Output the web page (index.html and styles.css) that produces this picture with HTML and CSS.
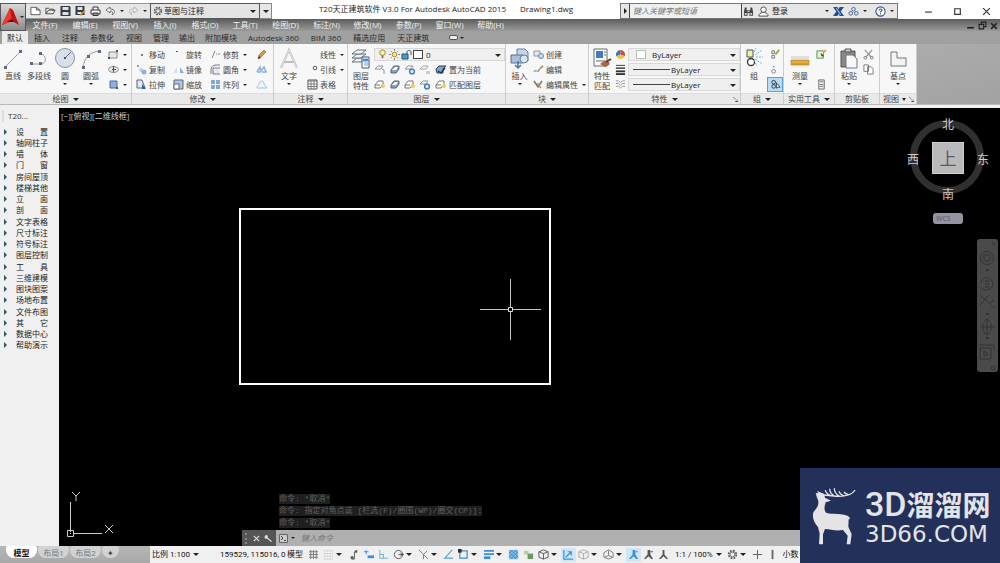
FILE: index.html
```html
<!DOCTYPE html>
<html lang="zh-CN">
<head>
<meta charset="utf-8">
<title>T20天正建筑软件 V3.0 For Autodesk AutoCAD 2015</title>
<link rel="stylesheet" href="styles.css">
</head>
<body>
<svg class="defs" aria-hidden="true">
  <symbol id="new" viewBox="0 0 12 10"><path d="M1 1h6l4 3v5H1zM7 1v3h4" fill="#fff" stroke="#555"/></symbol>
  <symbol id="open" viewBox="0 0 12 10"><path d="M1 8V2h3l1 1h4v2M1 8l3-4h7L9 8z" fill="#eee" stroke="#444"/></symbol>
  <symbol id="save" viewBox="0 0 10 10"><path d="M0 0h9l1 1v9H0z" fill="#333a44"/><path d="M2 1h6v3H2zM2 6h6v3H2z" fill="#dde2e8"/></symbol>
  <symbol id="saveas" viewBox="0 0 10 10"><path d="M0 0h9v9H0z" fill="#333a44"/><path d="M2 1h5v3H2zM2 6h4v2H2z" fill="#dde2e8"/><path d="M4 9l5-5 1 1-5 5z" fill="#d59b2c"/></symbol>
  <symbol id="print" viewBox="0 0 11 10"><path d="M3 4V1h5v3M1 4h9v4H1zM3 7h5v2.500H3z" fill="#fff" stroke="#333"/></symbol>
  <symbol id="undo" viewBox="0 0 11 10"><path d="M5 1L1 4l4 3V5c3 0 3 2 2 4 4-3 3-6-2-6z" fill="#f5f5f5" stroke="#555" stroke-width=".8"/></symbol>
  <symbol id="redo" viewBox="0 0 11 10"><path d="M6 1l4 3-4 3V5C3 5 3 7 4 9 0 6 1 3 6 3z" fill="#eee" stroke="#aaa" stroke-width=".8"/></symbol>
  <symbol id="gear" viewBox="0 0 12 12"><circle cx="6" cy="6" r="4.200" fill="none" stroke="currentColor" stroke-width="1.800" stroke-dasharray="2 1.300"/><circle cx="6" cy="6" r="2.700" fill="none" stroke="currentColor"/></symbol>
  <symbol id="binoc" viewBox="0 0 12 11"><path d="M2 1h2v3h4V1h2l1 5v4H7V7H5v3H1V6z" fill="#444"/><path d="M2 7h2v2H2zM8 7h2v2H8zM5 5h2v1H5z" fill="#ddd"/></symbol>
  <symbol id="user" viewBox="0 0 12 12"><circle cx="6" cy="4" r="3" fill="#fff" stroke="#444"/><path d="M1 11c0-3 2-3 4-4h2c2 1 4 1 4 4z" fill="#fff" stroke="#444"/></symbol>
  <symbol id="exch" viewBox="0 0 10 10"><path d="M0 1h4l1 2 1-2h4L7 5l3 4H6L5 7 4 9H0l3-4z" fill="#1e4d92"/><path d="M3 2l4 6" stroke="#9fc0ea"/></symbol>
  <symbol id="a360" viewBox="0 0 12 11"><g fill="#dbe3f4" stroke="#3f5f96"><circle cx="6" cy="3" r="2"/><circle cx="3" cy="7.500" r="2"/><circle cx="9" cy="7.500" r="2"/></g></symbol>
  <symbol id="help" viewBox="0 0 12 12"><circle cx="6" cy="6" r="5" fill="#fff" stroke="#31568f" stroke-width="1.200"/><path d="M4.500 5c0-2.500 3.500-2 3 0-.2.800-1.500.9-1.500 2M6 8v1.300" fill="none" stroke="#31568f" stroke-width="1.200"/></symbol>

  <symbol id="line" viewBox="0 0 22 24"><path d="M3 20L19 4" stroke="#999"/><path d="M2 19h3v3H2zM17 3h3v3h-3z" fill="#5c6b88"/></symbol>
  <symbol id="pline" viewBox="0 0 22 24"><path d="M3 17h10c6 0 6-10-1-10" fill="none" stroke="#999"/><path d="M2 15h3v3H2zM11 15h3v3h-3zM11 5h3v3h-3z" fill="#5c6b88"/></symbol>
  <symbol id="circle" viewBox="0 0 22 24"><circle cx="11" cy="11" r="9.500" fill="#d9dfe8" stroke="#8a93a3"/><path d="M11 11l6-6" stroke="#5c6b88"/><path d="M10 10h2v2h-2z" fill="#456"/></symbol>
  <symbol id="arc" viewBox="0 0 22 24"><path d="M3 21C4 11 9 5 20 4" fill="none" stroke="#999"/><path d="M2 19h3v3H2zM7 8h3v3H7zM18 3h3v3h-3z" fill="#5c6b88"/></symbol>
  <symbol id="rect" viewBox="0 0 11 11"><path d="M1 3h8v6H1z" fill="#e4e7ec" stroke="#888"/><path d="M8 1h2v2H8zM0 8h2v2H0z" fill="#456"/></symbol>
  <symbol id="ell" viewBox="0 0 11 11"><ellipse cx="5.500" cy="5.500" rx="5" ry="3" fill="#e4e7ec" stroke="#888"/><path d="M5.500 2v6M4 5.500h4" stroke="#456"/></symbol>
  <symbol id="hatch" viewBox="0 0 11 11"><path d="M2 2h7v7H2z" fill="#8db0de" stroke="#4c6a96"/><path d="M8 8h2v2H8z" fill="#456"/></symbol>
  <symbol id="dot" viewBox="0 0 11 11"><path d="M5 5h2v2H5z" fill="#778"/></symbol>
  <symbol id="rot" viewBox="0 0 11 11"><path d="M3 2h2v1H3z" fill="#558"/></symbol>
  <symbol id="copy" viewBox="0 0 11 11"><path d="M1 1h2v2H1z" fill="#99a"/><circle cx="5" cy="6" r="2" fill="#bcd2ee"/><circle cx="8" cy="8" r="2.500" fill="#8cb0df"/></symbol>
  <symbol id="mirror" viewBox="0 0 11 11"><path d="M0 9l4-6v6z" fill="#dde"/><path d="M11 9L7 3v6z" fill="#8cb0df"/></symbol>
  <symbol id="stretch" viewBox="0 0 11 11"><path d="M1 1h5l3 8H1z" fill="#dfe9f6" stroke="#567"/><path d="M6 5l4 5H6z" fill="#2d62a8"/></symbol>
  <symbol id="scale" viewBox="0 0 11 11"><path d="M1 1h9v9H1z" fill="#a6c4ea" stroke="#667"/><path d="M1 5h5v5H1z" fill="#fff" stroke="#667"/></symbol>
  <symbol id="trim" viewBox="0 0 11 11"><path d="M2 9L5 2M6 5h1M8 5h2" stroke="#889"/></symbol>
  <symbol id="fillet" viewBox="0 0 11 11"><path d="M1 10V6c0-3 2-5 5-5h4M3 10V4h7M3 10h7" fill="none" stroke="#778"/><path d="M4 9c0-3 2-4 5-4v4z" fill="#e3e8ee"/></symbol>
  <symbol id="array" viewBox="0 0 11 11"><path d="M1 1h4v4H1zM6 1h4v4H6zM1 6h4v4H1zM6 6h4v4H6z" fill="#86a9d2"/></symbol>
  <symbol id="erase" viewBox="0 0 11 11"><path d="M2 10l1-4 5-5 2 2-5 5z" fill="#d79b45" stroke="#754" stroke-width=".6"/><path d="M2 10l1-3 2 2z" fill="#534"/></symbol>
  <symbol id="explode" viewBox="0 0 11 11"><path d="M1 8l3-5 1 4 3-4 2 5M1 8h4M6 8h5" fill="none" stroke="#8cb0df" stroke-width="1.500"/></symbol>
  <symbol id="offset" viewBox="0 0 11 11"><path d="M1 9c0-3 2-2 2-5 3-4 5-1 5 1l3 4z" fill="#eef4fb" stroke="#9cc0e6"/></symbol>
  <symbol id="biga" viewBox="0 0 22 24"><path d="M3 21L11 3l8 18M6 15h10" fill="none" stroke="#b9bcc2" stroke-width="2"/><path d="M3 21L11 3l8 18" fill="none" stroke="#fff" stroke-width=".6"/></symbol>
  <symbol id="leader" viewBox="0 0 11 11"><circle cx="8" cy="4" r="1.800" fill="none" stroke="#555"/></symbol>
  <symbol id="table" viewBox="0 0 11 11"><path d="M1 1h9v9H1z" fill="#fff" stroke="#555"/><path d="M1 2h9M1 5h9M1 7.500h9M4 2v8M7 2v8" stroke="#666" stroke-width=".8"/></symbol>
  <symbol id="layers" viewBox="0 0 22 24"><g fill="#f1f3f5" stroke="#66707c"><path d="M2 15l5-4h9l-5 4z"/><path d="M2 11l5-4h9l-5 4z"/><path d="M2 7l5-4h9l-5 4z"/></g><path d="M12 10h7v11h-7z" fill="#fff" stroke="#3c5678"/><path d="M13 12h5v2h-5zM14 16h4M14 18h4" fill="#4b8ad0" stroke="#4b8ad0" stroke-width=".8"/></symbol>
  <symbol id="bulb" viewBox="0 0 10 12"><circle cx="5" cy="4" r="3" fill="#fff3a8" stroke="#9a7b20"/><path d="M4 7h2v3H4z" fill="#777"/></symbol>
  <symbol id="sun" viewBox="0 0 12 12"><circle cx="6" cy="6" r="2.500" fill="#ffe98a" stroke="#a87d18"/><path d="M6 0v2M6 10v2M0 6h2M10 6h2M2 2l1 1M9 9l1 1M2 10l1-1M9 3l1-1" stroke="#776"/></symbol>
  <symbol id="lock" viewBox="0 0 11 11"><path d="M1 5h6v5H1z" fill="#4a9bd5" stroke="#256"/><path d="M6 5V3c0-2 4-2 4 0v3" fill="none" stroke="#456"/></symbol>
  <symbol id="lay1" viewBox="0 0 12 11"><path d="M1 5l3-3h5L7 5zM8 5l2 1v4" fill="#fff" stroke="#8992a0"/></symbol>
  <symbol id="lay2" viewBox="0 0 12 11"><path d="M2 9V6l3-4h5v3L7 9z" fill="#7fa3d0" stroke="#5a6470"/><path d="M3 6l3-3h3L7 6z" fill="#fff"/></symbol>
  <symbol id="lay3" viewBox="0 0 12 11"><path d="M1 5l3-3h5L7 5z" fill="#fff" stroke="#8992a0"/><circle cx="8" cy="7.500" r="2.400" fill="#dcebfa" stroke="#3c78b9" stroke-width="1.400"/></symbol>
  <symbol id="lay4" viewBox="0 0 12 11"><path d="M1 5l3-3h5L7 5z" fill="#fff" stroke="#9da4ae"/><path d="M7 7h4v3H7z" fill="#c9ccd2"/></symbol>
  <symbol id="lay5" viewBox="0 0 12 11"><path d="M1 5l3-3h7L8 5v4H2z" fill="#7fa3d0" stroke="#333e50"/><path d="M3 7l3 2 4-5" fill="none" stroke="#234" stroke-width="1.300"/></symbol>
  <symbol id="lay6" viewBox="0 0 12 11"><path d="M1 9V6l3-4h5v3L6 9zM1 6h5" fill="#fff" stroke="#777"/><circle cx="9" cy="7" r="2" fill="#f2cc55"/></symbol>
  <symbol id="insert" viewBox="0 0 22 24"><path d="M8 2h8l3 3v9H8z" fill="#c3d5ec" stroke="#67809f"/><path d="M2 8h12v8H2z" fill="#a9bfdb" stroke="#5b6f8b"/><circle cx="15" cy="12" r="4" fill="#dbe6f3" stroke="#67809f"/><path d="M9 14v7M6 18l3 3 3-3" fill="none" stroke="#4a76ad" stroke-width="1.500"/></symbol>
  <symbol id="create" viewBox="0 0 11 11"><path d="M1 2h6v5H1z" fill="#e7ebf0" stroke="#8a94a2"/><circle cx="8" cy="7" r="2.500" fill="#c7dbf2" stroke="#6f86a5"/></symbol>
  <symbol id="edit" viewBox="0 0 11 11"><path d="M1 8c2-4 4 2 5-2 1-3 3-1 4-4" fill="none" stroke="#6f9bd0" stroke-width="1.300"/><path d="M5 6l4-5 1 1-4 5z" fill="#d2a252"/></symbol>
  <symbol id="attr" viewBox="0 0 11 11"><path d="M1 2l4 6 4-6" fill="none" stroke="#777" stroke-width="1.500"/><path d="M4 4l4 5" stroke="#c8953b" stroke-width="1.500"/></symbol>
  <symbol id="match" viewBox="0 0 22 24"><path d="M3 2h13v17H3z" fill="#fff" stroke="#667"/><path d="M5 4h7v7H5z" fill="#3e7cc2"/><path d="M13 5h2M13 8h2M5 14h9" stroke="#667"/><path d="M9 17l4-3c3-1 7 1 5 4l-4 2z" fill="#a9673c"/><path d="M15 15l5-3" stroke="#633" stroke-width="2"/></symbol>
  <symbol id="wheel" viewBox="0 0 12 12"><path d="M6 6V1a5 5 0 0 0-4.500 7z" fill="#486fc0"/><path d="M6 6V1a5 5 0 0 1 4.500 7z" fill="#d44b3d"/><path d="M6 6L1.500 8a5 5 0 0 0 9 0z" fill="#e8c33a"/></symbol>
  <symbol id="lw" viewBox="0 0 12 12"><path d="M1 1.500h10" stroke="#333"/><path d="M1 4.500h10" stroke="#333" stroke-width="1.500"/><path d="M1 8h10" stroke="#333" stroke-width="2"/><path d="M1 11h10" stroke="#333" stroke-width="2"/></symbol>
  <symbol id="lt" viewBox="0 0 12 12"><path d="M1 2h3l2 2 2-2h3M1 5h3l2 2 2-2h3M1 8h3l2 2 2-2h3" fill="none" stroke="#999"/></symbol>
  <symbol id="group" viewBox="0 0 22 24"><path d="M4 3h6v7H4z" fill="#eef2a8" stroke="#555"/><circle cx="8" cy="15" r="3.500" fill="#fff" stroke="#333" stroke-width="1.300"/><path d="M12 8l7-5M13 10h7M12 12l7 5M11 13l3 6M11 5l2-4" stroke="#78add8" stroke-dasharray="2 1"/></symbol>
  <symbol id="g1" viewBox="0 0 12 12"><path d="M2 2h3v3H2zM2 7h3v3H2z" fill="#eee" stroke="#777"/><path d="M6 6l4-5" stroke="#94a935" stroke-width="2"/></symbol>
  <symbol id="g2" viewBox="0 0 12 12"><path d="M3 2h2v2H3z" fill="#8cb0df"/><circle cx="4" cy="8" r="2" fill="#fff" stroke="#777"/></symbol>
  <symbol id="g3" viewBox="0 0 12 12"><circle cx="4" cy="3.500" r="2" fill="none" stroke="#234"/><circle cx="4" cy="8" r="2" fill="none" stroke="#234"/><path d="M7 4l4 5H9l-2 1z" fill="#fff" stroke="#345"/></symbol>
  <symbol id="ruler" viewBox="0 0 22 24"><path d="M2 9h18v3H2z" fill="#dedede"/><path d="M2 13h18v5H2z" fill="#e5ad3d" stroke="#a87a22" stroke-width=".6"/><path d="M3 17h16" stroke="#c48c22"/></symbol>
  <symbol id="qs" viewBox="0 0 12 12"><path d="M1 2h7v8H1z" fill="#e9f2df" stroke="#5f8a4c"/><path d="M5 4l4 4H6z" fill="#333"/><path d="M8 4l3-3" stroke="#e0a534" stroke-width="2"/></symbol>
  <symbol id="calc" viewBox="0 0 12 12"><path d="M3 1h6v10H3z" fill="#f1f1f1" stroke="#666"/><path d="M4 3h4M4 6h4M4 8h4" stroke="#777"/></symbol>
  <symbol id="paste" viewBox="0 0 22 24"><path d="M3 4h14v16H3z" fill="#888" stroke="#555"/><path d="M7 2h6v3H7z" fill="#ccc" stroke="#555"/><path d="M8 8h7l4 4v9H8z" fill="#f8f8f8" stroke="#777"/></symbol>
  <symbol id="cut" viewBox="0 0 12 12"><path d="M2 1l7 8M10 1L3 9" stroke="#999" stroke-width="1.400"/><circle cx="2.500" cy="9.500" r="1.500" fill="none" stroke="#777"/><circle cx="9.500" cy="9.500" r="1.500" fill="none" stroke="#777"/></symbol>
  <symbol id="cpy" viewBox="0 0 12 12"><path d="M1 1h5v7H1zM5 3h4l2 2v6H5z" fill="#fff" stroke="#777"/></symbol>
  <symbol id="base" viewBox="0 0 22 24"><path d="M4 5h6v6h9v8H4z" fill="#f3f3f3" stroke="#777"/></symbol>

  <symbol id="s-grid" viewBox="0 0 12 12"><path d="M3 1v10M6 1v10M9 1v10M1 3h10M1 6h10M1 9h10" stroke="#777"/></symbol>
  <symbol id="s-snap" viewBox="0 0 12 12"><path d="M1 2h10M1 5h10M1 8h10M1 11h10" stroke="#bbb" stroke-dasharray="2 1"/></symbol>
  <symbol id="s-inf" viewBox="0 0 12 12"><path d="M4 11h3V3h3" fill="none" stroke="#555"/><path d="M3 8h3v3H3zM8 1h2v3H8z" fill="#555"/></symbol>
  <symbol id="s-dyn" viewBox="0 0 12 12"><path d="M1 3h5M3.500 1v5" stroke="#3a8fd8"/><path d="M5 7h7v3H5z" fill="#3a8fd8"/></symbol>
  <symbol id="s-ort" viewBox="0 0 12 12"><path d="M2 1v9h9M2 6h4v4" fill="none" stroke="#6ba8dc"/></symbol>
  <symbol id="s-pol" viewBox="0 0 12 12"><circle cx="6" cy="6" r="4.500" fill="none" stroke="#555"/><path d="M6 6h6M8 4l2 2-2 2" fill="none" stroke="#555"/></symbol>
  <symbol id="s-iso" viewBox="0 0 12 12"><path d="M1 1l10 10M10 2L6 6v5" fill="none" stroke="#777"/></symbol>
  <symbol id="s-trk" viewBox="0 0 12 12"><path d="M10 1L2 10h9" fill="none" stroke="#5b9fd9" stroke-width="1.300"/></symbol>
  <symbol id="s-osn" viewBox="0 0 12 12"><path d="M2 2h8v8H2z" fill="none" stroke="#3a8fd8" stroke-width="1.300"/><path d="M0 0h4v4H0z" fill="#333"/></symbol>
  <symbol id="s-lwt" viewBox="0 0 12 12"><path d="M1 2h11M1 5.500h11" stroke="#3a8fd8" stroke-width="2"/><path d="M1 9.500h7" stroke="#3a8fd8" stroke-width="3"/></symbol>
  <symbol id="s-trn" viewBox="0 0 12 12"><path d="M1 1h10v10H1z" fill="#7cbcec"/><path d="M1 5l4-4M1 9l8-8M3 11l8-8M7 11l4-4M1 7l4 4M1 3l8 8M3 1l8 8M7 1l4 4" stroke="#3a84c4" stroke-width=".8"/></symbol>
  <symbol id="s-cyc" viewBox="0 0 12 12"><path d="M1 2h5v4H1z" fill="#b4d2a8"/><path d="M5 5h6v6H5z" fill="#6e9a61"/></symbol>
  <symbol id="s-cube" viewBox="0 0 12 12"><path d="M6 1l5 2v6l-5 2-5-2V3zM1 3l5 2 5-2M6 5v6" fill="none" stroke="currentColor"/></symbol>
  <symbol id="s-ucs" viewBox="0 0 12 12"><path d="M1 1v10h10M3 9l6-6M5 3h4v4" fill="none" stroke="#3a8fd8" stroke-width="1.300"/></symbol>
  <symbol id="s-giz" viewBox="0 0 12 12"><path d="M6 1l5 3v5l-5 2-5-2V4zM6 2v5M6 7l-4 2M6 7l4 2" fill="none" stroke="#777"/></symbol>
  <symbol id="s-ann" viewBox="0 0 12 12"><path d="M5 1h3v5l3 5H9L6 8l-3 3H1l4-5z" fill="currentColor"/><path d="M8 3h3" stroke="currentColor"/></symbol>
  <symbol id="s-tri" viewBox="0 0 12 12"><path d="M5 1h2v5l4 5H9L6 8l-3 3H1l4-5z" fill="currentColor"/></symbol>
  <symbol id="s-plus" viewBox="0 0 12 12"><path d="M6 1v10M1 6h10" stroke="#555"/></symbol>
  <symbol id="s-bar" viewBox="0 0 12 12"><path d="M5 1h2v10H5z" fill="#666"/></symbol>
</svg>

<header class="top">
  <button class="app" aria-label="应用程序菜单"><svg width="17" height="18" viewBox="0 0 17 18"><path d="M0 17L8 0l3 2 6 15-7-4z" fill="#c01414"/><path d="M8 0l2 13-10 4z" fill="#ec3a30"/><path d="M5 14l4-3 4 3" fill="#6d0909"/></svg><i class="caret tiny"></i></button>
  <div class="titlebar">
    <div class="quick">
      <button aria-label="新建"><svg><use href="#new"/></svg></button><button aria-label="打开"><svg><use href="#open"/></svg></button><button aria-label="保存"><svg><use href="#save"/></svg></button><button aria-label="另存为"><svg><use href="#saveas"/></svg></button><button aria-label="打印"><svg><use href="#print"/></svg></button><button aria-label="放弃"><svg><use href="#undo"/></svg></button><button class="narrow" aria-label="放弃列表"><i class="caret tiny"></i></button><button aria-label="重做"><svg><use href="#redo"/></svg></button><button class="narrow" aria-label="重做列表"><i class="caret tiny"></i></button>
    </div>
    <div class="combo workspace"><svg><use href="#gear"/></svg><select aria-label="工作空间"><option>草图与注释</option></select></div>
    <button class="more" aria-label="自定义"><i class="caret"></i></button>
    <h1 class="title"><span>T20天正建筑软件 V3.0 For Autodesk AutoCAD 2015</span><span>Drawing1.dwg</span></h1>
    <div class="info">
      <button class="expand" aria-label="展开"><i class="rcaret"></i></button>
      <input class="search" type="text" placeholder="键入关键字或短语" aria-label="搜索">
      <div class="tools">
        <button aria-label="查找"><svg><use href="#binoc"/></svg></button>
        <button class="login"><svg><use href="#user"/></svg>登录</button>
        <i class="caret tiny"></i>
        <button aria-label="Exchange"><svg><use href="#exch"/></svg></button>
        <button aria-label="A360"><svg><use href="#a360"/></svg></button><i class="caret tiny"></i>
        <button class="helpbtn" aria-label="帮助"><svg><use href="#help"/></svg></button><i class="caret tiny"></i>
      </div>
    </div>
    <div class="winctl">
      <button aria-label="最小化"><svg viewBox="0 0 8 8"><path d="M1 4.500h6" stroke="#333"/></svg></button>
      <button aria-label="最大化"><svg viewBox="0 0 8 8"><path d="M1.500 1.500h5v5h-5z" fill="none" stroke="#333"/></svg></button>
      <button aria-label="关闭"><svg viewBox="0 0 8 8"><path d="M1 1l6 6M7 1L1 7" stroke="#333"/></svg></button>
    </div>
  </div>
  <nav class="menubar">
    <button>文件(F)</button><button>编辑(E)</button><button>视图(V)</button><button>插入(I)</button><button>格式(O)</button><button>工具(T)</button><button>绘图(D)</button><button>标注(N)</button><button>修改(M)</button><button>参数(P)</button><button>窗口(W)</button><button>帮助(H)</button>
    <div class="mdi">
      <button aria-label="最小化图形"><svg viewBox="0 0 8 8"><path d="M1 6h6" stroke="#222" stroke-width="1.500"/></svg></button>
      <button aria-label="还原图形"><svg viewBox="0 0 8 8"><path d="M1 3h4v4H1zM3 3V1h4v4H5" fill="none" stroke="#222"/></svg></button>
      <button aria-label="关闭图形"><svg viewBox="0 0 8 8"><path d="M1 2l5 5M6 2L1 7" stroke="#222" stroke-width="1.500"/></svg></button>
    </div>
  </nav>
</header>

<nav class="tabs">
  <button class="on">默认</button><button>插入</button><button>注释</button><button>参数化</button><button>视图</button><button class="tight">管理</button><button class="tight">输出</button><button class="tight">附加模块</button><button>Autodesk 360</button><button>BIM 360</button><button>精选应用</button><button>天正建筑</button>
  <button class="toggle" aria-label="最小化功能区"><span class="pill"></span><i class="caret tiny"></i></button>
</nav>

<div class="ribbon">
  <section class="panel p-draw">
    <div class="body">
      <button class="big"><svg><use href="#line"/></svg>直线</button>
      <button class="big"><svg><use href="#pline"/></svg>多段线</button>
      <button class="big"><svg><use href="#circle"/></svg>圆<i class="caret tiny"></i></button>
      <button class="big"><svg><use href="#arc"/></svg>圆弧<i class="caret tiny"></i></button>
      <div class="rows">
        <button class="sm" aria-label="矩形"><svg><use href="#rect"/></svg><i class="caret tiny"></i></button>
        <button class="sm" aria-label="椭圆"><svg><use href="#ell"/></svg><i class="caret tiny"></i></button>
        <button class="sm" aria-label="图案填充"><svg><use href="#hatch"/></svg><i class="caret tiny"></i></button>
      </div>
    </div>
    <button class="ptitle">绘图<i class="caret"></i></button>
  </section>
  <section class="panel p-modify">
    <div class="body">
      <div class="rows">
        <button class="sm"><svg><use href="#dot"/></svg>移动</button>
        <button class="sm"><svg><use href="#copy"/></svg>复制</button>
        <button class="sm"><svg><use href="#stretch"/></svg>拉伸</button>
      </div>
      <div class="rows">
        <button class="sm"><svg><use href="#rot"/></svg>旋转</button>
        <button class="sm"><svg><use href="#mirror"/></svg>镜像</button>
        <button class="sm"><svg><use href="#scale"/></svg>缩放</button>
      </div>
      <div class="rows wide">
        <button class="sm"><svg><use href="#trim"/></svg>修剪<i class="caret tiny"></i></button>
        <button class="sm"><svg><use href="#fillet"/></svg>圆角<i class="caret tiny"></i></button>
        <button class="sm"><svg><use href="#array"/></svg>阵列<i class="caret tiny"></i></button>
      </div>
      <div class="rows">
        <button class="sm" aria-label="删除"><svg><use href="#erase"/></svg></button>
        <button class="sm" aria-label="分解"><svg><use href="#explode"/></svg></button>
        <button class="sm" aria-label="偏移"><svg><use href="#offset"/></svg></button>
      </div>
    </div>
    <button class="ptitle">修改<i class="caret"></i></button>
  </section>
  <section class="panel p-anno">
    <div class="body">
      <button class="big"><svg><use href="#biga"/></svg>文字<i class="caret tiny"></i></button>
      <div class="rows">
        <button class="sm"><svg></svg>线性<i class="caret tiny"></i></button>
        <button class="sm"><svg><use href="#leader"/></svg>引线<i class="caret tiny"></i></button>
        <button class="sm"><svg><use href="#table"/></svg>表格</button>
      </div>
    </div>
    <button class="ptitle">注释<i class="caret"></i></button>
  </section>
  <section class="panel p-layer">
    <div class="body">
      <button class="big"><svg><use href="#layers"/></svg>图层<br>特性</button>
      <div class="rows grow">
        <div class="combo"><svg><use href="#bulb"/></svg><svg><use href="#sun"/></svg><svg><use href="#lock"/></svg><span class="swatch dark"></span><select aria-label="图层"><option>0</option></select></div>
        <div class="strip">
          <button aria-label="关"><svg><use href="#lay1"/></svg></button><button aria-label="隔离"><svg><use href="#lay2"/></svg></button><button aria-label="冻结"><svg><use href="#lay3"/></svg></button><button aria-label="锁定"><svg><use href="#lay4"/></svg></button><button class="sm"><svg><use href="#lay5"/></svg>置为当前</button>
        </div>
        <div class="strip">
          <button aria-label="打开所有图层"><svg><use href="#lay6"/></svg></button><button aria-label="取消隔离"><svg><use href="#lay2"/></svg></button><button aria-label="解冻"><svg><use href="#lay6"/></svg></button><button aria-label="解锁"><svg><use href="#lay3"/></svg></button><button class="sm"><svg><use href="#lay6"/></svg>匹配图层</button>
        </div>
      </div>
    </div>
    <button class="ptitle">图层<i class="caret"></i></button>
  </section>
  <section class="panel p-block">
    <div class="body">
      <button class="big"><svg><use href="#insert"/></svg>插入<i class="caret tiny"></i></button>
      <div class="rows">
        <button class="sm"><svg><use href="#create"/></svg>创建</button>
        <button class="sm"><svg><use href="#edit"/></svg>编辑</button>
        <button class="sm"><svg><use href="#attr"/></svg>编辑属性<i class="caret tiny"></i></button>
      </div>
    </div>
    <button class="ptitle">块<i class="caret"></i></button>
  </section>
  <section class="panel p-prop">
    <div class="body">
      <button class="big"><svg><use href="#match"/></svg>特性<br>匹配</button>
      <div class="rows grow">
        <div class="prop"><svg><use href="#wheel"/></svg><div class="combo"><span class="swatch"></span><select aria-label="颜色"><option>ByLayer</option></select></div></div>
        <div class="prop"><svg><use href="#lw"/></svg><div class="combo"><span class="rule"></span><select aria-label="线宽"><option>ByLayer</option></select></div></div>
        <div class="prop"><svg><use href="#lt"/></svg><div class="combo"><span class="rule"></span><select aria-label="线型"><option>ByLayer</option></select></div></div>
      </div>
    </div>
    <button class="ptitle">特性<i class="caret"></i><span class="launch">↘</span></button>
  </section>
  <section class="panel p-group">
    <div class="body">
      <button class="big"><svg><use href="#group"/></svg>组</button>
      <div class="rows">
        <button class="sm" aria-label="取消编组"><svg><use href="#g1"/></svg></button>
        <button class="sm" aria-label="组编辑"><svg><use href="#g2"/></svg></button>
        <button class="sm pressed" aria-label="启用组选择"><svg><use href="#g3"/></svg></button>
      </div>
    </div>
    <button class="ptitle">组<i class="caret"></i></button>
  </section>
  <section class="panel p-util">
    <div class="body">
      <button class="big"><svg><use href="#ruler"/></svg>测量<i class="caret tiny"></i></button>
      <div class="rows spread">
        <button class="sm" aria-label="快速选择"><svg><use href="#qs"/></svg></button>
        <button class="sm" aria-label="计算器"><svg><use href="#calc"/></svg></button>
      </div>
    </div>
    <button class="ptitle">实用工具<i class="caret"></i></button>
  </section>
  <section class="panel p-clip">
    <div class="body">
      <button class="big"><svg><use href="#paste"/></svg>粘贴<i class="caret tiny"></i></button>
      <div class="rows">
        <button class="sm" aria-label="剪切"><svg><use href="#cut"/></svg></button>
        <button class="sm" aria-label="复制"><svg><use href="#cpy"/></svg></button>
      </div>
    </div>
    <button class="ptitle">剪贴板</button>
  </section>
  <section class="panel p-view">
    <div class="body">
      <button class="big"><svg><use href="#base"/></svg>基点<i class="caret tiny"></i></button>
    </div>
    <button class="ptitle">视图<i class="caret"></i><span class="launch">↘</span></button>
  </section>
</div>

<main class="work">
  <aside class="side">
    <h2>T20...</h2>
    <ul>
      <li><button>设 置</button></li><li><button>轴网柱子</button></li><li><button>墙 体</button></li><li><button>门 窗</button></li><li><button>房间屋顶</button></li><li><button>楼梯其他</button></li><li><button>立 面</button></li><li><button>剖 面</button></li><li><button>文字表格</button></li><li><button>尺寸标注</button></li><li><button>符号标注</button></li><li><button>图层控制</button></li><li><button>工 具</button></li><li><button>三维建模</button></li><li><button>图块图案</button></li><li><button>场地布置</button></li><li><button>文件布图</button></li><li><button>其 它</button></li><li><button>数据中心</button></li><li><button>帮助演示</button></li>
    </ul>
  </aside>
  <div class="canvas">
    <p class="viewlabel">[−][俯视][二维线框]</p>
    <svg class="model" width="560" height="300" viewBox="0 0 560 300">
      <path d="M181 101h310v175H181z" fill="none" stroke="#fff" stroke-width="2"/>
      <path d="M421 201.500h28M454 201.500h28M451.500 171v28M451.500 204v28" stroke="#c4c4c4"/>
      <path d="M449.500 199.500h4v4h-4z" fill="none" stroke="#ddd"/>
    </svg>
    <svg class="ucs" width="60" height="54" viewBox="0 0 60 54">
      <path d="M10.500 41V11M13 42.500h29M7.500 39.500h6v6h-6zM10 42.500h1" fill="none" stroke="#ccc"/>
      <path d="M12 1l4 4 4-4M16 5v5M45 34l8 8M53 34l-8 8" fill="none" stroke="#ccc"/>
    </svg>
    <div class="cube">
      <svg width="76" height="76" viewBox="0 0 76 76"><circle cx="38" cy="38" r="33.500" fill="none" stroke="#303030" stroke-width="7"/></svg>
      <span class="n">北</span><span class="w">西</span><button class="face">上</button><span class="e">东</span><span class="s">南</span>
    </div>
    <button class="wcs">WCS</button>
    <div class="navbar">
      <svg width="21" height="133" viewBox="0 0 21 133" fill="none" stroke="#333">
        <path d="M15 3l3 3M18 3l-3 3"/><circle cx="10" cy="19" r="6.500"/><path d="M7 16h6v4c0 3-6 3-6 0z"/><path d="M9 31h3M9 75h3M9 99h3" stroke-width="2"/>
        <path d="M4 44c0-5 4-6 7-5 4 1 6 5 4 9-3 4-9 4-11 0M8 42h4M8 45h4M8 48h4"/><path d="M3 56l10 9M12 56L3 66M14 66l4 3M13 64l4-3"/>
        <path d="M10 80v16M3 88h15M6 84v8M14 84v8M7 83l3-3 3 3M7 93l3 3 3-3"/><path d="M3 109h11v11H3zM7 112v5l4-2zM2 106h15v5"/><circle cx="16" cy="129" r="2"/>
      </svg>
    </div>
    <div class="history"><span>命令: *取消*</span><span>命令: 指定对角点或 [栏选(F)/圈围(WP)/圈交(CP)]:</span><span>命令: *取消*</span></div>
    <div class="cmd">
      <div class="grip"><i class="dots"></i>
        <button aria-label="关闭命令行"><svg viewBox="0 0 10 10"><path d="M2 2l6 6M8 2L2 8" stroke="#ddd" stroke-width="1.300"/></svg></button>
        <button aria-label="自定义命令行"><svg viewBox="0 0 10 10"><path d="M1 2c2-2 4 0 3 2l5 4-1 1-5-4C1 6 0 4 1 2l2 1z" fill="#ddd"/></svg></button>
      </div>
      <label class="prompt" for="cmdline"><svg width="9" height="9" viewBox="0 0 9 9"><path d="M.5.500h8v8h-8z" fill="#ccc" stroke="#666"/><path d="M2 2l2 2-2 2M5 6.500h2" fill="none" stroke="#444"/></svg><i class="caret tiny"></i></label>
      <input id="cmdline" type="text" placeholder="键入命令" aria-label="命令">
    </div>
  </div>
</main>

<footer class="foot">
  <nav class="layouts"><button class="on">模型</button><button>布局1</button><button>布局2</button><button aria-label="新建布局">✦</button></nav>
  <div class="status">
    <button class="txt scale">比例 1:100<i class="caret"></i></button>
    <span class="coords">159529, 115016, 0</span>
    <button class="txt">模型</button>
    <div class="icons">
      <button aria-label="栅格"><svg><use href="#s-grid"/></svg></button><button aria-label="捕捉"><svg><use href="#s-snap"/></svg><i class="caret"></i></button><button aria-label="推断约束"><svg><use href="#s-inf"/></svg></button><button aria-label="动态输入"><svg><use href="#s-dyn"/></svg></button><button aria-label="正交"><svg><use href="#s-ort"/></svg></button><button aria-label="极轴"><svg><use href="#s-pol"/></svg><i class="caret"></i></button><button aria-label="等轴测"><svg><use href="#s-iso"/></svg><i class="caret"></i></button><button aria-label="对象追踪"><svg><use href="#s-trk"/></svg></button><button aria-label="对象捕捉"><svg><use href="#s-osn"/></svg><i class="caret"></i></button><button aria-label="线宽显示"><svg><use href="#s-lwt"/></svg><i class="caret"></i></button><button aria-label="透明度"><svg><use href="#s-trn"/></svg></button><button aria-label="选择循环"><svg><use href="#s-cyc"/></svg></button><button aria-label="三维捕捉"><svg><use href="#s-cube"/></svg><i class="caret"></i></button><button class="lit" aria-label="动态UCS"><svg><use href="#s-ucs"/></svg></button><button class="pale" aria-label="过滤"><svg><use href="#s-cube"/></svg><i class="caret"></i></button><button aria-label="小控件"><svg><use href="#s-giz"/></svg><i class="caret"></i></button><button class="blue" aria-label="注释可见性"><svg><use href="#s-ann"/></svg></button><button aria-label="自动缩放"><svg><use href="#s-ann"/></svg></button><button aria-label="注释比例"><svg><use href="#s-tri"/></svg></button>
    </div>
    <button class="txt ratio">1:1 / 100%<i class="caret"></i></button>
    <div class="icons tail">
      <button aria-label="切换工作空间"><svg><use href="#gear"/></svg><i class="caret"></i></button><button aria-label="注释监视器"><svg><use href="#s-plus"/></svg></button><button aria-label="单位"><svg><use href="#s-bar"/></svg></button>
    </div>
    <button class="txt">小数</button>
  </div>
</footer>

<div class="mark">
  <svg width="45" height="60" viewBox="65 78 135 178"><path d="M76 98l8 1-4-8 9 5 12 4 3 12 18 9-16 5c-4 14-6 22 2 32 20 5 70-1 71 18l-4 1-1 22 10 23-4 30h-11l3-26-14-17c-20 4-38-2-54-3l-6 16v30H86l2-32-5-20C68 185 62 160 74 150c10-12 14-24 6-38z" fill="#e4e4e6"/><path d="M98 104c26 0 52 10 74 0 12-3 18-8 22-15M120 105c-10-4-14-8-15-16M132 107c-10-6-14-14-14-22M148 108c-12-6-16-14-16-24M162 107c-8-2-14-8-16-14M174 103c-6-1-10-4-13-8" fill="none" stroke="#e4e4e6" stroke-width="4"/></svg>
  <div class="words"><p class="cn"><span>3D</span>溜溜网</p><p class="en">3D66.COM</p></div>
</div>
</body>
</html>
```
FILE: styles.css
```css
* { box-sizing: border-box; }
html, body { height: 100%; }
body {
  margin: 0;
  display: flex;
  flex-direction: column;
  overflow: hidden;
  background: #f0f0f0;
  color: #333;
  font: 8px/10px "Open Sans", "Noto Sans CJK SC", sans-serif;
}
button, select, input {
  margin: 0;
  padding: 0;
  border: 0;
  background: none;
  color: inherit;
  font: inherit;
  min-width: 0;
}
button { white-space: nowrap; }
select { appearance: none; outline: 0; }
svg { display: block; flex: none; }
h1, h2, p, ul { margin: 0; padding: 0; font: inherit; }
.defs { position: absolute; width: 0; height: 0; }

.caret {
  display: inline-block;
  flex: none;
  border: 3px solid transparent;
  border-top: 3px solid #222;
  border-bottom: 0;
}
.caret.tiny { border-width: 2px 2px 0; }
.rcaret { border: 3px solid transparent; border-left-color: #222; border-right: 0; }

/* title bar and menus */
.top { display: grid; grid-template-columns: 26px 1fr; grid-template-rows: 19px 12px; background: #fff; flex: none; }
.app {
  grid-column: 1;
  grid-row: 1 / 3;
  margin-top: 3px;
  display: flex;
  align-items: center;
  justify-content: center;
  gap: 1px;
  background: linear-gradient(#d8d8d8, #8c8c8c);
  border: 1px solid #555;
  z-index: 1;
}
.titlebar { grid-column: 2; grid-row: 1; display: flex; align-items: stretch; padding-top: 3px; }
.quick { display: flex; width: 124px; background: #e6e6e6; border: 1px solid #999; border-width: 1px 0; padding-left: 2px; }
.quick button { width: 15px; display: grid; place-items: center; }
.quick .narrow { width: 8px; }
.quick svg { width: 11px; height: 10px; }
.combo { position: relative; display: flex; align-items: center; min-width: 0; }
.combo select { flex: 1; align-self: stretch; }
.combo::after {
  content: "";
  position: absolute;
  right: 3px;
  top: calc(50% - 1px);
  border: 3px solid transparent;
  border-top-color: #222;
  border-bottom: 0;
  pointer-events: none;
}
.workspace { width: 110px; background: #e4e4e4; border: 1px solid #555; padding-left: 2px; gap: 1px; color: #222; }
.workspace svg { width: 10px; height: 10px; color: #555; }
.more { width: 12px; background: #e6e6e6; border: 1px solid #888; border-left: 0; display: grid; place-items: center; }
.title { flex: 1; display: flex; justify-content: center; gap: 14px; line-height: 12px; color: #222; white-space: nowrap; }
.info { display: flex; width: 278px; border: 1px solid #777; background: #e6e6e6; }
.expand { width: 8px; display: grid; place-items: center; }
.search { width: 113px; background: #f0f0f0; border: 1px solid #444; border-width: 0 1px; padding-left: 3px; }
.search::placeholder, #cmdline::placeholder { color: #777; font-style: italic; opacity: 1; }
.tools { flex: 1; display: flex; align-items: center; gap: 4px; padding: 0 3px 0 1px; }
.tools svg { width: 11px; height: 11px; }
.login { display: flex; align-items: center; gap: 3px; margin-right: auto; color: #222; }
.helpbtn { margin-left: 4px; }
.winctl { width: 102px; display: flex; align-items: center; justify-content: flex-end; gap: 20px; padding-right: 9px; }
.winctl svg { width: 9px; height: 9px; }
.menubar {
  grid-column: 1 / 3;
  grid-row: 2;
  display: flex;
  align-items: center;
  padding: 0 0 0 25px;
  background: linear-gradient(#5c5c5c, #9a9a9a);
  color: #f2f2f2;
}
.menubar > button { width: 40px; }
.menubar > button:nth-child(n+7) { width: 41px; }
.mdi { margin-left: auto; display: flex; gap: 3px; padding-right: 1px; }
.mdi svg { width: 9px; height: 9px; }

/* ribbon */
.tabs { flex: none; display: flex; height: 13px; background: #a0a0a0; padding-left: 2px; color: #2a2a2a; }
.tabs button { padding: 0 6px; }
.tabs .on { background: #ececec; padding: 0 5px; }
.tabs .tight { padding: 0 5px; }
.tabs .toggle { display: flex; align-items: center; gap: 2px; margin-left: 8px; }
.pill { width: 9px; height: 5px; background: #eee; border: 1px solid #555; border-radius: 2px; }
.ribbon { flex: none; display: flex; height: 61px; background: linear-gradient(165deg, #c9c9c9, #a2a2a2); border-bottom: 1px solid #bbb; }
.panel { flex: none; display: flex; flex-direction: column; background: #f7f7f7; border-right: 1px solid #ccc; color: #444; }
.body { flex: 1; display: flex; padding-top: 3px; }
.ptitle { position: relative; height: 11px; line-height: 10px; background: #e9e9e9; border-top: 1px solid #ddd; display: flex; justify-content: center; align-items: center; gap: 4px; }
.launch { position: absolute; right: 1px; bottom: 0; font-size: 7px; line-height: 9px; }
.big { width: 26px; display: flex; flex-direction: column; align-items: center; line-height: 10px; }
.big svg { width: 22px; height: 24px; }
.big .caret { margin-top: 2px; }
.rows { display: grid; grid-template-rows: repeat(3, 15px); }
.rows.grow { flex: 1; min-width: 0; }
.sm { display: flex; align-items: center; gap: 2px; }
.sm svg { width: 11px; height: 11px; }
.sm .caret { margin-left: 2px; }
.p-draw { width: 132px; }
.p-draw .rows { margin-left: 4px; }
.p-modify { width: 142px; }
.p-modify .body { padding-left: 4px; }
.p-modify .rows { width: 37px; }
.p-modify .rows.wide { width: 46px; }
.p-modify .rows:last-child { width: 12px; }
.p-anno { width: 74px; }
.p-anno .big { width: 30px; }
.p-anno .rows { margin-left: 3px; }
.p-layer { width: 158px; }
.p-layer .combo, .prop .combo { background: #efefef; border: 1px solid #d8d8d8; height: 13px; align-self: center; padding-left: 2px; gap: 1px; color: #222; }
.p-layer .combo svg { width: 11px; height: 11px; }
.swatch { width: 10px; height: 9px; background: #fff; border: 1px solid #bbb; margin: 0 5px; }
.swatch.dark { border-color: #444; margin: 0 2px 0 0; }
.strip { display: flex; align-items: center; }
.strip button { width: 15px; }
.strip .sm { width: auto; margin-left: 1px; }
.strip svg { width: 12px; height: 11px; }
.p-block { width: 83px; }
.p-block .big { width: 27px; }
.p-prop { width: 152px; }
.prop { display: flex; align-items: center; gap: 2px; }
.prop svg { width: 11px; height: 11px; }
.prop .combo { flex: 1; }
.rule { width: 37px; margin-left: 2px; border-top: 1px solid #444; }
.p-group { width: 43px; }
.p-group .rows { width: 16px; }
.p-group .sm { justify-content: center; }
.pressed { background: #b9dbf3; border: 1px solid #5da0d0; }
.p-util { width: 51px; }
.p-util .big { width: 32px; }
.p-util .spread { grid-template-rows: 15px 15px; row-gap: 15px; }
.p-clip { width: 45px; }
.p-clip .big { width: 28px; }
.p-view { width: 37px; }
.p-view .big { width: 36px; }
.p-view .ptitle { justify-content: flex-start; padding-left: 3px; gap: 3px; }
.p-view .caret:not(.tiny) { border-width: 3px 2px 0; }

/* work area */
.work { flex: 1; display: flex; min-height: 0; padding-top: 3px; }
.side { width: 59px; flex: none; background: #f0f0f0; }
.side h2 { margin: 2px 2px 4px; padding-left: 4px; border-left: 2px solid #ddd; line-height: 12px; }
.side ul { list-style: none; display: grid; grid-auto-rows: 1fr; height: 225px; }
.side li { display: flex; align-items: center; padding-left: 4px; color: #222; }
.side li::before { content: ""; border: 3px solid transparent; border-left-color: #2c5568; border-right: 0; }
.side button { width: 32px; margin-left: 9px; text-align: justify; text-align-last: justify; line-height: 10px; }
.canvas { flex: 1; position: relative; background: #000; overflow: hidden; color: #ccc; }
.viewlabel { padding: 3px 2px; }
.model { position: absolute; left: 0; top: 0; }
.ucs { position: absolute; left: 1px; bottom: 1px; }
.cube { position: absolute; right: 10px; top: 11px; width: 84px; height: 80px; font: 12px/14px "Noto Sans CJK SC", sans-serif; }
.cube > * { position: absolute; }
.cube svg { left: 3px; top: 0; }
.cube .n { left: 36px; top: -2px; }
.cube .s { left: 36px; top: 68px; }
.cube .w { left: 1px; top: 33px; }
.cube .e { left: 71px; top: 33px; }
.face { left: 26px; top: 23px; width: 32px; height: 32px; background: #b9b9bc; border: 1px solid #cfcfcf; color: #5a5a62; text-align: center; font-size: 17px; line-height: 20px; }
.wcs { position: absolute; right: 37px; top: 105px; width: 30px; height: 11px; padding-left: 3px; border-radius: 3px; background: #9494a0; color: #5a5a66; text-align: left; font-size: 7px; line-height: 10px; }
.navbar { position: absolute; right: 2px; top: 131px; background: #4a4a4a; border-radius: 3px; }
.history { position: absolute; left: 220px; bottom: 18px; display: flex; flex-direction: column; align-items: flex-start; gap: 2px; color: #606060; font: 8px/10px "Liberation Mono", "Noto Sans CJK SC", monospace; }
.history span { background: #1f1f1f; white-space: pre; }
.cmd { position: absolute; left: 183px; right: 0; bottom: 0; height: 16px; display: flex; align-items: center; background: #b0b0b0; }
.grip { width: 34px; align-self: stretch; display: flex; align-items: center; justify-content: space-between; padding: 0 3px; background: #555; }
.dots { width: 3px; height: 11px; border-left: 2px dotted #888; }
.grip svg { width: 9px; height: 9px; }
.prompt { display: flex; align-items: center; gap: 3px; padding: 0 6px 0 3px; }
.cmd input { flex: 1; color: #222; }

/* footer */
.foot { flex: none; height: 17px; display: flex; background: #f0f0f0; }
.layouts { width: 150px; background: linear-gradient(#b6b6b6, #a9a9a9); display: flex; padding: 0 0 5px 6px; gap: 1px; color: #777; }
.layouts button { width: 31px; height: 12px; background: #d2d2d2; border-radius: 2px 2px 8px 8px; line-height: 11px; }
.layouts .on { background: #fff; color: #111; font-weight: bold; }
.layouts button:last-child { width: 17px; color: #444; }
.status { flex: 1; min-width: 0; display: flex; align-items: center; padding-left: 2px; color: #111; white-space: nowrap; font-family: Roboto, "Noto Sans CJK SC", sans-serif; }
.status > * { flex: none; }
.txt { display: flex; align-items: center; gap: 3px; }
.scale { width: 68px; }
.coords { width: 67px; }
.icons { display: flex; margin-left: 3px; color: #555; }
.icons button { display: flex; align-items: center; padding: 0 2px; height: 14px; }
.icons svg { width: 11px; height: 11px; }
.icons .caret { margin: 0 2px; }
.icons .lit { background: #cfe6f8; }
.icons .pale { color: #aaa; }
.icons .blue { color: #3a8fd8; background: #cfe6f8; }
.ratio { margin-left: 4px; }
.tail { margin: 0 3px; }

.mark { position: fixed; right: 0; bottom: 0; width: 200px; height: 95px; display: flex; align-items: center; gap: 8px; padding-left: 12px; background: #22305a; color: #e4e4e6; white-space: nowrap; }
.words { padding-top: 4px; }
.cn { display: flex; align-items: center; font: bold 28px/32px "Noto Sans CJK SC", sans-serif; }
.cn span { font: 500 34px/32px Roboto, sans-serif; }
.en { font: 23px/28px "DejaVu Sans", sans-serif; }
```
